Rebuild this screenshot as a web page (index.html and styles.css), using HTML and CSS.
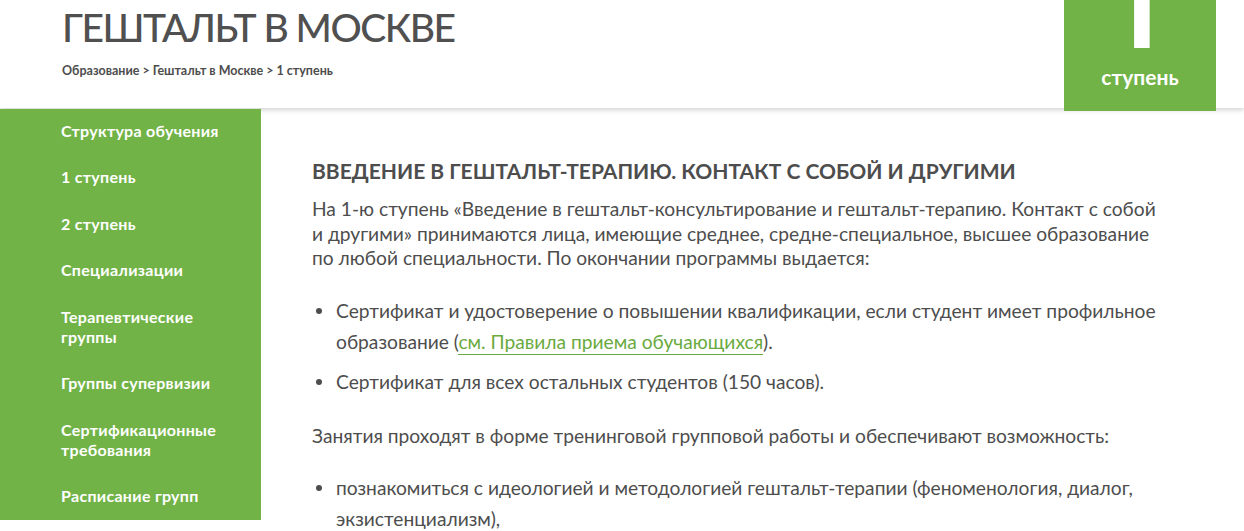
FILE: index.html
```html
<!DOCTYPE html>
<html lang="ru">
<head>
<meta charset="utf-8">
<title>Гештальт в Москве — 1 ступень</title>
<link rel="stylesheet" href="styles.css">
</head>
<body>
<header class="header">
  <div class="header-text">
    <h1 class="page-title">ГЕШТАЛЬТ В МОСКВЕ</h1>
    <nav class="crumbs">Образование &gt; Гештальт в Москве &gt; 1 ступень</nav>
  </div>
  <div class="stage-badge">
    <div class="stage-num"><span class="stage-digit">1</span></div>
    <div class="stage-label">ступень</div>
  </div>
</header>
<div class="main">
  <aside class="sidebar">
    <a class="side-link" href="#">Структура обучения</a>
    <a class="side-link" href="#">1 ступень</a>
    <a class="side-link" href="#">2 ступень</a>
    <a class="side-link" href="#">Специализации</a>
    <a class="side-link" href="#">Терапевтические группы</a>
    <a class="side-link" href="#">Группы супервизии</a>
    <a class="side-link" href="#">Сертификационные требования</a>
    <a class="side-link" href="#">Расписание групп</a>
  </aside>
  <section class="content">
    <h2 class="section-title">ВВЕДЕНИЕ В ГЕШТАЛЬТ-ТЕРАПИЮ. КОНТАКТ С СОБОЙ И ДРУГИМИ</h2>
    <p class="para">На 1-ю ступень «Введение в гештальт-консультирование и гештальт-терапию. Контакт с собой и другими» принимаются лица, имеющие среднее, средне-специальное, высшее образование по любой специальности. По окончании программы выдается:</p>
    <ul class="list">
      <li>Сертификат и удостоверение о повышении квалификации, если студент имеет профильное образование (<a class="link" href="#">см. Правила приема обучающихся</a>).</li>
      <li>Сертификат для всех остальных студентов (150 часов).</li>
    </ul>
    <p class="para">Занятия проходят в форме тренинговой групповой работы и обеспечивают возможность:</p>
    <ul class="list">
      <li>познакомиться с идеологией и методологией гештальт-терапии (феноменология, диалог, экзистенциализм),</li>
    </ul>
  </section>
</div>
</body>
</html>
```
FILE: styles.css
```css
html, body {
  margin: 0;
  padding: 0;
  background: #fff;
  font-family: "Lato", "Open Sans", "Noto Sans", sans-serif;
  color: #4d4d4d;
  overflow: hidden;
}

.header {
  position: relative;
  z-index: 1;
  height: 108px;
  display: flex;
  justify-content: space-between;
  align-items: flex-start;
  padding: 0 28px 0 62px;
  background: #fff;
  box-shadow: 0 2px 5px rgba(0, 0, 0, 0.18);
}

.page-title {
  margin: 6px 0 0;
  font-size: 39px;
  line-height: 42px;
  font-weight: 500;
  color: #505050;
  letter-spacing: -1.5px;
}

.crumbs {
  margin-top: 16px;
  font-size: 12.5px;
  line-height: 14px;
  font-weight: 700;
  color: #4d4d4d;
}

.stage-badge {
  width: 152px;
  height: 111px;
  background: #72b347;
  color: #fff;
  display: flex;
  flex-direction: column;
  align-items: center;
}

.stage-num {
  height: 48px;
  overflow: hidden;
}

.stage-digit {
  display: block;
  margin-top: -41px;
  margin-left: -4px;
  font-family: "Roboto", sans-serif;
  font-weight: 700;
  font-size: 110px;
  line-height: 110px;
}

.stage-label {
  margin-top: 17px;
  font-size: 21px;
  line-height: 24px;
  font-weight: 700;
}

.main {
  display: flex;
  align-items: flex-start;
}

.sidebar {
  position: relative;
  z-index: 2;
  flex: 0 0 261px;
  box-sizing: border-box;
  width: 261px;
  margin-top: 1px;
  padding: 0 28px 0 61px;
  background: #72b347;
  display: flex;
  flex-direction: column;
}

.side-link {
  display: block;
  padding: 13px 0 13.5px;
  font-size: 16px;
  line-height: 20px;
  font-weight: 700;
  letter-spacing: 0.3px;
  color: #fff;
  text-decoration: none;
}

.side-link:first-child {
  padding-top: 11.5px;
}

.content {
  box-sizing: border-box;
  width: 902px;
  padding: 50px 0 0 51px;
}

.section-title {
  margin: 0 0 13px;
  font-size: 21px;
  line-height: 26px;
  font-weight: 700;
  color: #4d4d4d;
}

.para {
  margin: 0;
  font-size: 19.2px;
  line-height: 24.5px;
}

.list {
  list-style: none;
  margin: 24px 0 27px;
  padding: 0;
}

.list li {
  position: relative;
  padding-left: 24px;
  margin-bottom: 9px;
  font-size: 19.2px;
  line-height: 31px;
}

.list li::before {
  content: "";
  position: absolute;
  left: 4px;
  top: 13px;
  width: 6px;
  height: 6px;
  border-radius: 50%;
  background: #4d4d4d;
}

.link {
  color: #6aaa3f;
  text-decoration: none;
  border-bottom: 1px solid #6aaa3f;
  padding-bottom: 1px;
}
```
